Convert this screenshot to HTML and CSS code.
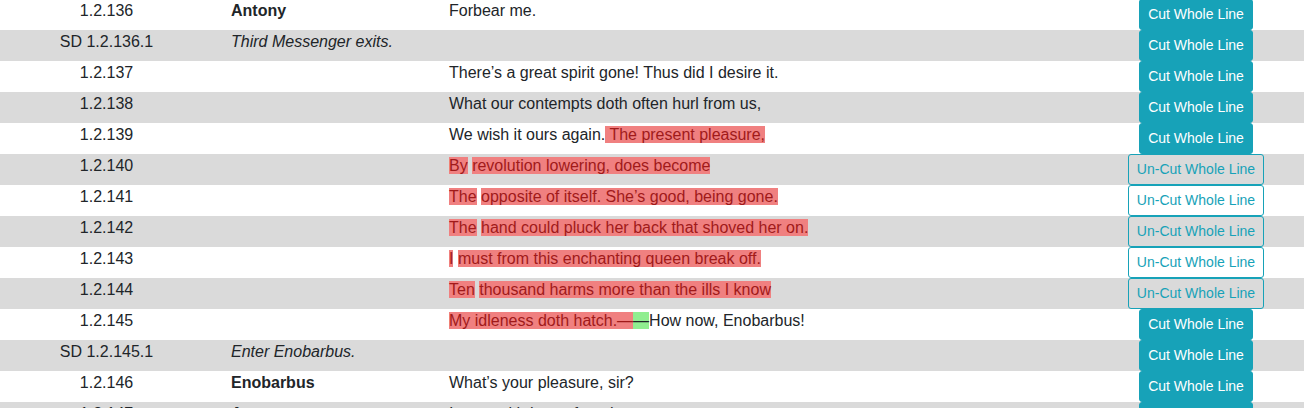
FILE: index.html
```html
<!DOCTYPE html>
<html lang="en">
<head>
<meta charset="utf-8">
<title>Script</title>
<link rel="stylesheet" href="styles.css">
</head>
<body>
<div class="script">
  <div class="row">
    <div class="num">1.2.136</div>
    <div class="speaker">Antony</div>
    <div class="text">Forbear me.</div>
    <div class="act"><button class="btn cut">Cut Whole Line</button></div>
  </div>
  <div class="row">
    <div class="num">SD 1.2.136.1</div>
    <div class="stage">Third Messenger exits.</div>
    <div class="text"></div>
    <div class="act"><button class="btn cut">Cut Whole Line</button></div>
  </div>
  <div class="row">
    <div class="num">1.2.137</div>
    <div class="speaker"></div>
    <div class="text">There’s a great spirit gone! Thus did I desire it.</div>
    <div class="act"><button class="btn cut">Cut Whole Line</button></div>
  </div>
  <div class="row">
    <div class="num">1.2.138</div>
    <div class="speaker"></div>
    <div class="text">What our contempts doth often hurl from us,</div>
    <div class="act"><button class="btn cut">Cut Whole Line</button></div>
  </div>
  <div class="row">
    <div class="num">1.2.139</div>
    <div class="speaker"></div>
    <div class="text">We wish it ours again.<span class="del"> The present pleasure,</span></div>
    <div class="act"><button class="btn cut">Cut Whole Line</button></div>
  </div>
  <div class="row">
    <div class="num">1.2.140</div>
    <div class="speaker"></div>
    <div class="text"><span class="del">By</span> <span class="del">revolution lowering, does become</span></div>
    <div class="act"><button class="btn uncut">Un-Cut Whole Line</button></div>
  </div>
  <div class="row">
    <div class="num">1.2.141</div>
    <div class="speaker"></div>
    <div class="text"><span class="del">The</span> <span class="del">opposite of itself. She’s good, being gone.</span></div>
    <div class="act"><button class="btn uncut">Un-Cut Whole Line</button></div>
  </div>
  <div class="row">
    <div class="num">1.2.142</div>
    <div class="speaker"></div>
    <div class="text"><span class="del">The</span> <span class="del">hand could pluck her back that shoved her on.</span></div>
    <div class="act"><button class="btn uncut">Un-Cut Whole Line</button></div>
  </div>
  <div class="row">
    <div class="num">1.2.143</div>
    <div class="speaker"></div>
    <div class="text"><span class="del">I</span> <span class="del">must from this enchanting queen break off.</span></div>
    <div class="act"><button class="btn uncut">Un-Cut Whole Line</button></div>
  </div>
  <div class="row">
    <div class="num">1.2.144</div>
    <div class="speaker"></div>
    <div class="text"><span class="del">Ten</span> <span class="del">thousand harms more than the ills I know</span></div>
    <div class="act"><button class="btn uncut">Un-Cut Whole Line</button></div>
  </div>
  <div class="row">
    <div class="num">1.2.145</div>
    <div class="speaker"></div>
    <div class="text"><span class="del">My idleness doth hatch.—</span><span class="add">—</span>How now, Enobarbus!</div>
    <div class="act"><button class="btn cut">Cut Whole Line</button></div>
  </div>
  <div class="row">
    <div class="num">SD 1.2.145.1</div>
    <div class="stage">Enter Enobarbus.</div>
    <div class="text"></div>
    <div class="act"><button class="btn cut">Cut Whole Line</button></div>
  </div>
  <div class="row">
    <div class="num">1.2.146</div>
    <div class="speaker">Enobarbus</div>
    <div class="text">What’s your pleasure, sir?</div>
    <div class="act"><button class="btn cut">Cut Whole Line</button></div>
  </div>
  <div class="row">
    <div class="num">1.2.147</div>
    <div class="speaker">Antony</div>
    <div class="text">I must with haste from hence.</div>
    <div class="act"><button class="btn cut">Cut Whole Line</button></div>
  </div>
</div>
</body>
</html>
```

FILE: styles.css
```css
html, body {
  margin: 0;
  padding: 0;
  background: #fff;
}
body {
  font-family: "Liberation Sans", Arial, sans-serif;
  font-size: 16px;
  line-height: 1.5;
  color: #212529;
  overflow: hidden;
}
.script {
  margin-top: -1px;
}
.row {
  display: grid;
  grid-template-columns: 213px 236px 1fr 216px;
  height: 31px;
  align-items: start;
}
.row:nth-child(even) {
  background: #dadada;
}
.num {
  text-align: center;
  white-space: nowrap;
}
.speaker {
  padding-left: 18px;
  font-weight: bold;
}
.stage {
  padding-left: 18px;
  font-style: italic;
}
.text {
  white-space: nowrap;
}
.act {
  display: flex;
  justify-content: center;
}
.del {
  background: #f08080;
  color: #a11a1a;
}
.add {
  background: #90ee90;
}
.btn {
  font-family: "Liberation Sans", Arial, sans-serif;
  font-size: 14px;
  line-height: 21px;
  padding: 4px 8px;
  border-radius: 3px;
  border: 1px solid #17a2b8;
  cursor: pointer;
  white-space: nowrap;
  margin: 0;
}
.cut {
  background: #17a2b8;
  color: #fff;
}
.uncut {
  background: transparent;
  color: #17a2b8;
}
```
